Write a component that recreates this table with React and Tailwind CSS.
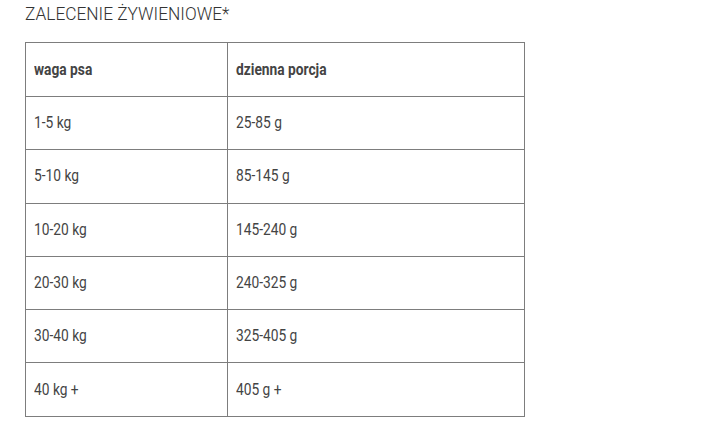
import React from 'react';

const rows = [
  ['1-5 kg', '25-85 g'],
  ['5-10 kg', '85-145 g'],
  ['10-20 kg', '145-240 g'],
  ['20-30 kg', '240-325 g'],
  ['30-40 kg', '325-405 g'],
  ['40 kg +', '405 g +'],
];

const Narrow = ({ children }) => (
  <span className="inline-block origin-left scale-x-[0.86] whitespace-nowrap">{children}</span>
);

const App = () => {
  return (
    <div className="w-[712px] h-[429px] bg-white overflow-hidden font-['Roboto',sans-serif] text-[#444]">
      <h1 className="pl-[25px] pt-[3px] text-[19px] leading-[22px] font-light text-[#333]">
        <span className="inline-block origin-left scale-x-[0.91] whitespace-nowrap">ZALECENIE ŻYWIENIOWE*</span>
      </h1>
      <table className="ml-[25px] mt-[17px] border-collapse w-[500px] text-[16px]">
        <thead>
          <tr className="h-[54px]">
            <th className="w-[202px] border border-[#7d7d7d] px-[8px] text-left font-bold">
              <Narrow>waga psa</Narrow>
            </th>
            <th className="border border-[#7d7d7d] px-[8px] text-left font-bold">
              <Narrow>dzienna porcja</Narrow>
            </th>
          </tr>
        </thead>
        <tbody>
          {rows.map(([weight, portion]) => (
            <tr key={weight} className="h-[53.3px]">
              <td className="border border-[#7d7d7d] px-[8px]">
                <Narrow>{weight}</Narrow>
              </td>
              <td className="border border-[#7d7d7d] px-[8px]">
                <Narrow>{portion}</Narrow>
              </td>
            </tr>
          ))}
        </tbody>
      </table>
    </div>
  );
};

export default App;
